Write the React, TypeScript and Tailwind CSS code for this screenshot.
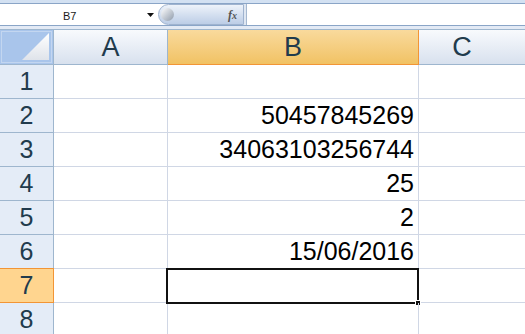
import React from "react";

const rows: { n: number; v: string }[] = [
  { n: 1, v: "" },
  { n: 2, v: "50457845269" },
  { n: 3, v: "34063103256744" },
  { n: 4, v: "25" },
  { n: 5, v: "2" },
  { n: 6, v: "15/06/2016" },
  { n: 7, v: "" },
  { n: 8, v: "" },
];

export default function App() {
  return (
    <div
      className="w-[525px] h-[334px] overflow-hidden bg-white relative"
      style={{ fontFamily: '"Liberation Sans", Arial, sans-serif' }}
    >
      {/* top strip */}
      <div className="h-[3px] bg-[#d3e1f2]" />
      <div className="h-px bg-[#8aa5c7]" />
      {/* formula bar */}
      <div className="h-[21px] flex bg-white">
        <div className="w-[158px] relative flex items-center">
          <span className="absolute left-[63px] top-[4px] text-[11px] text-[#1a1a1a]">B7</span>
          <svg className="absolute left-[147px] top-[9px]" width="7" height="4" viewBox="0 0 7 4">
            <path d="M0 0 H7 L3.5 4 Z" fill="#111" />
          </svg>
        </div>
        <div className="w-[86px] h-[21px] rounded-l-full bg-gradient-to-b from-[#eef3fa] to-[#bccde6] border border-[#9fb3cf] relative">
          <div className="absolute left-[2px] top-[3px] w-[13px] h-[13px] rounded-full bg-gradient-to-br from-[#ffffff] to-[#8e9aaa]" />
          <span
            className="absolute right-[6px] top-[1px] text-[12px] italic font-bold text-[#555]"
            style={{ fontFamily: '"Liberation Serif", serif' }}
          >
            f<span className="text-[10px]">x</span>
          </span>
        </div>
        <div className="w-[2px] bg-[#dfe7f2]" />
        <div className="flex-1 bg-white border-l border-[#a5b8d0]" />
      </div>
      <div className="h-px bg-[#8aa5c7]" />
      <div className="h-[3px] bg-[#e3eaf5]" />
      {/* grid */}
      <div className="grid grid-cols-[54px_114px_251px_1fr] border-t border-[#9eb6ce]">
        {/* header row */}
        <div className="h-[35px] border-r border-b border-[#9eb6ce] bg-[#a9c5eb] relative">
          <div className="absolute inset-[1px] border border-[#c3d6f0]" />
          <svg className="absolute right-[4px] bottom-[4px]" width="27" height="27" viewBox="0 0 27 27">
            <defs>
              <linearGradient id="tri" x1="0" y1="0" x2="0" y2="1">
                <stop offset="0" stopColor="#ffffff" />
                <stop offset="1" stopColor="#dfe3ea" />
              </linearGradient>
            </defs>
            <path d="M27 0 V27 H0 Z" fill="url(#tri)" />
          </svg>
        </div>
        <div className="h-[35px] border-r border-b border-[#9eb6ce] bg-gradient-to-b from-[#f8fafd] to-[#d8e1ee] flex items-center justify-center text-[27px] text-[#213b4d]">
          A
        </div>
        <div className="h-[35px] border-r border-b border-[#f29536] bg-gradient-to-b from-[#f9da9c] to-[#f1c263] flex items-center justify-center text-[27px] text-[#213b4d]">
          B
        </div>
        <div className="h-[35px] border-b border-[#9eb6ce] bg-gradient-to-b from-[#f8fafd] to-[#d8e1ee] flex items-center justify-center text-[27px] text-[#213b4d] pr-[20px]">
          C
        </div>
        {rows.map((r) => {
          const sel = r.n === 7;
          return (
            <React.Fragment key={r.n}>
              <div
                className={
                  sel
                    ? "h-[34px] border-r border-b border-[#f29536] bg-[#ffd58f] flex items-center justify-center text-[25px] text-[#213b4d] -mt-px border-t h-[35px]"
                    : "h-[34px] border-r border-b border-[#9eb6ce] bg-[#e4ecf7] flex items-center justify-center text-[25px] text-[#213b4d]"
                }
              >
                {r.n}
              </div>
              <div className="h-[34px] border-r border-b border-[#d0d7e5]" />
              <div className="h-[34px] border-r border-b border-[#d0d7e5] flex items-center justify-end pr-[4px] pt-[1px] text-[25px] text-black relative">
                {r.v}
                {sel && (
                  <div className="absolute -left-[2px] -top-[1px] w-[253px] h-[36px] border-2 border-[#111]">
                    <div className="absolute -right-[4px] -bottom-[4px] w-[6px] h-[6px] bg-[#111] border border-white" />
                  </div>
                )}
              </div>
              <div className="h-[34px] border-b border-[#d0d7e5]" />
            </React.Fragment>
          );
        })}
      </div>
    </div>
  );
}
